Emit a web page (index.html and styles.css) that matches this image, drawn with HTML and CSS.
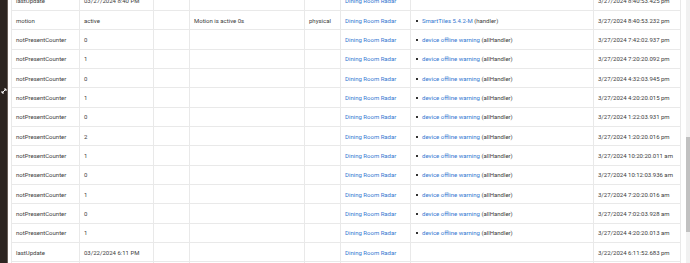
FILE: index.html
```html
<!DOCTYPE html>
<html>
<head>
<meta charset="utf-8">
<link rel="stylesheet" href="styles.css">
</head>
<body>
<div class="sidebar">
  <svg class="resize" width="6" height="6" viewBox="0 0 6 6"><path d="M1 5 L5 1 M3 1 H5 V3 M1 3 V5 H3" stroke="#fff" stroke-width="1" fill="none"/></svg>
</div>
<main class="main">
<table class="events">
<colgroup>
<col style="width:68px"><col style="width:74px"><col style="width:36px"><col style="width:115px"><col style="width:36px"><col style="width:70px"><col style="width:183px"><col style="width:87px">
</colgroup>
<tbody>
<tr><td>lastUpdate</td><td>03/27/2024 8:40 PM</td><td></td><td></td><td></td><td><a class="link">Dining Room Radar</a></td><td></td><td>3/27/2024 8:40:53.425 pm</td></tr>
<tr><td>motion</td><td>active</td><td></td><td>Motion is active 0s</td><td>physical</td><td><a class="link">Dining Room Radar</a></td><td><span class="bullet"><a class="link">SmartTiles 5.4.2-M</a> (handler)</span></td><td>3/27/2024 8:40:53.232 pm</td></tr>
<tr><td>notPresentCounter</td><td>0</td><td></td><td></td><td></td><td><a class="link">Dining Room Radar</a></td><td><span class="bullet"><a class="link">device offline warning</a> (allHandler)</span></td><td>3/27/2024 7:42:02.937 pm</td></tr>
<tr><td>notPresentCounter</td><td>1</td><td></td><td></td><td></td><td><a class="link">Dining Room Radar</a></td><td><span class="bullet"><a class="link">device offline warning</a> (allHandler)</span></td><td>3/27/2024 7:20:20.092 pm</td></tr>
<tr><td>notPresentCounter</td><td>0</td><td></td><td></td><td></td><td><a class="link">Dining Room Radar</a></td><td><span class="bullet"><a class="link">device offline warning</a> (allHandler)</span></td><td>3/27/2024 4:32:03.945 pm</td></tr>
<tr><td>notPresentCounter</td><td>1</td><td></td><td></td><td></td><td><a class="link">Dining Room Radar</a></td><td><span class="bullet"><a class="link">device offline warning</a> (allHandler)</span></td><td>3/27/2024 4:20:20.015 pm</td></tr>
<tr><td>notPresentCounter</td><td>0</td><td></td><td></td><td></td><td><a class="link">Dining Room Radar</a></td><td><span class="bullet"><a class="link">device offline warning</a> (allHandler)</span></td><td>3/27/2024 1:22:03.931 pm</td></tr>
<tr><td>notPresentCounter</td><td>2</td><td></td><td></td><td></td><td><a class="link">Dining Room Radar</a></td><td><span class="bullet"><a class="link">device offline warning</a> (allHandler)</span></td><td>3/27/2024 1:20:20.016 pm</td></tr>
<tr><td>notPresentCounter</td><td>1</td><td></td><td></td><td></td><td><a class="link">Dining Room Radar</a></td><td><span class="bullet"><a class="link">device offline warning</a> (allHandler)</span></td><td>3/27/2024 10:20:20.011 am</td></tr>
<tr><td>notPresentCounter</td><td>0</td><td></td><td></td><td></td><td><a class="link">Dining Room Radar</a></td><td><span class="bullet"><a class="link">device offline warning</a> (allHandler)</span></td><td>3/27/2024 10:12:03.936 am</td></tr>
<tr><td>notPresentCounter</td><td>1</td><td></td><td></td><td></td><td><a class="link">Dining Room Radar</a></td><td><span class="bullet"><a class="link">device offline warning</a> (allHandler)</span></td><td>3/27/2024 7:20:20.016 am</td></tr>
<tr><td>notPresentCounter</td><td>0</td><td></td><td></td><td></td><td><a class="link">Dining Room Radar</a></td><td><span class="bullet"><a class="link">device offline warning</a> (allHandler)</span></td><td>3/27/2024 7:02:03.928 am</td></tr>
<tr><td>notPresentCounter</td><td>1</td><td></td><td></td><td></td><td><a class="link">Dining Room Radar</a></td><td><span class="bullet"><a class="link">device offline warning</a> (allHandler)</span></td><td>3/27/2024 4:20:20.013 am</td></tr>
<tr><td>lastUpdate</td><td>03/22/2024 6:11 PM</td><td></td><td></td><td></td><td><a class="link">Dining Room Radar</a></td><td></td><td>3/22/2024 6:11:52.683 pm</td></tr>
<tr><td></td><td></td><td></td><td></td><td></td><td></td><td></td><td></td></tr>
</tbody>
</table>
</main>
<div class="scrollbar"><div class="thumb"></div></div>
</body>
</html>
```
FILE: styles.css
```css
html, body {
  margin: 0;
  padding: 0;
  height: 263px;
  overflow: hidden;
  background: #fff;
}
body {
  display: flex;
  font-family: Roboto, "Liberation Sans", sans-serif;
  font-size: 6px;
  color: #3c3c3c;
}
.sidebar {
  width: 7px;
  flex: none;
  background: #2c2521;
  border-right: 1px solid #6a605a;
  display: flex;
  flex-direction: column;
}
.resize {
  margin-top: 88px;
  margin-left: 1px;
}
.main {
  flex: none;
  width: 672px;
  padding-left: 3px;
  overflow: hidden;
}
.events {
  border-collapse: collapse;
  table-layout: fixed;
  width: 670px;
  margin-top: -9.35px;
}
.events td {
  border: 1px solid #e9e9e9;
  height: 19.35px;
  padding: 0 4px;
  white-space: nowrap;
  overflow: hidden;
  vertical-align: middle;
  box-sizing: border-box;
}
.link {
  color: #3478d1;
  text-decoration: none;
}
.bullet::before {
  content: "";
  display: inline-block;
  width: 2px;
  height: 2px;
  background: #333;
  margin: 0 4px 1px 1px;
  vertical-align: middle;
}
.scrollbar {
  flex: none;
  width: 7px;
  margin-left: 3px;
  background: #f1f1f1;
  display: flex;
  flex-direction: column;
}
.thumb {
  margin-top: 137px;
  height: 95px;
  background: #c1c1c1;
}
```
